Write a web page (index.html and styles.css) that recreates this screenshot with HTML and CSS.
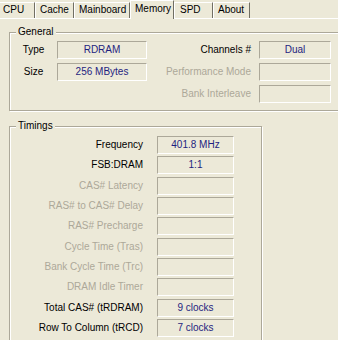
FILE: index.html
```html
<!DOCTYPE html>
<html lang="en">

<head>
    <meta charset="UTF-8">
    <meta name="viewport" content="width=device-width, initial-scale=1.0">
    <title>Memory</title>
    <link rel="stylesheet" href="styles.css">
</head>

<body>
    <div class="window">
        <div class="tabs">
            <div class="tab tab-cpu">CPU</div>
            <div class="tab tab-cache">Cache</div>
            <div class="tab tab-board">Mainboard</div>
            <div class="tab tab-memory active">Memory</div>
            <div class="tab tab-spd">SPD</div>
            <div class="tab tab-about">About</div>
        </div>

        <div class="panel">
            <div class="group general">
                <div class="group-title">General</div>
                <div class="general-grid">
                    <div class="label center">Type</div>
                    <div class="value">RDRAM</div>
                    <div class="label right">Channels #</div>
                    <div></div>
                    <div class="value">Dual</div>

                    <div class="label center">Size</div>
                    <div class="value">256 MBytes</div>
                    <div class="label right off">Performance Mode</div>
                    <div></div>
                    <div class="value"></div>

                    <div></div>
                    <div></div>
                    <div class="label right off">Bank Interleave</div>
                    <div></div>
                    <div class="value"></div>
                </div>
            </div>

            <div class="group timings">
                <div class="group-title">Timings</div>
                <div class="timing-grid">
                    <div class="label right">Frequency</div>
                    <div class="value">401.8 MHz</div>

                    <div class="label right">FSB:DRAM</div>
                    <div class="value">1:1</div>

                    <div class="label right off">CAS# Latency</div>
                    <div class="value"></div>

                    <div class="label right off">RAS# to CAS# Delay</div>
                    <div class="value"></div>

                    <div class="label right off">RAS# Precharge</div>
                    <div class="value"></div>

                    <div class="label right off">Cycle Time (Tras)</div>
                    <div class="value"></div>

                    <div class="label right off">Bank Cycle Time (Trc)</div>
                    <div class="value"></div>

                    <div class="label right off">DRAM Idle Timer</div>
                    <div class="value"></div>

                    <div class="label right">Total CAS# (tRDRAM)</div>
                    <div class="value">9 clocks</div>

                    <div class="label right">Row To Column (tRCD)</div>
                    <div class="value">7 clocks</div>
                </div>
            </div>
        </div>
    </div>
</body>

</html>
```

FILE: styles.css
```css
* {
    margin: 0;
    padding: 0;
    box-sizing: border-box;
}

body {
    font-family: "Liberation Sans", Arial, sans-serif;
    font-size: 10px;
    background-color: #ece9d8;
    color: #000;
    overflow: hidden;
    width: 338px;
    height: 340px;
}

.window {
    width: 338px;
    height: 340px;
    overflow: hidden;
}

/* tab strip */

.tabs {
    display: flex;
    align-items: flex-end;
    height: 19px;
    border-bottom: 1px solid #fff;
}

.tab {
    height: 16px;
    line-height: 14px;
    padding-left: 4px;
    border-top: 1px solid #fff;
    border-left: 1px solid #fff;
    border-right: 1px solid #716f64;
    white-space: nowrap;
}

.tab-cpu {
    width: 35px;
    padding-left: 3px;
    border-left: none;
}

.tab-cache {
    width: 39px;
}

.tab-board {
    width: 56px;
}

.tab-memory {
    width: 44px;
}

.tab-spd {
    width: 39px;
    padding-left: 5px;
}

.tab-about {
    width: 37px;
}

.tab.active {
    height: 19px;
    line-height: 15px;
    margin-bottom: -1px;
    background-color: #ece9d8;
    position: relative;
}

/* group boxes */

.panel {
    padding-top: 13px;
}

.group {
    border: 1px solid #aca899;
    box-shadow: inset 1px 1px 0 #fff, 1px 1px 0 #fff;
    margin-left: 9px;
}

.group-title {
    display: table;
    margin: -7px 0 0 6px;
    padding: 0 2px;
    line-height: 12px;
    background-color: #ece9d8;
}

.general {
    width: 340px;
    height: 79px;
}

.general-grid {
    display: grid;
    grid-template-columns: 47px 90px 104px 8px 72px;
    grid-template-rows: 18px 18px 18px;
    row-gap: 4px;
    margin-top: 3px;
}

.timings {
    width: 253px;
    height: 240px;
    margin-top: 15px;
}

.timing-grid {
    display: grid;
    grid-template-columns: 133px 77px;
    grid-auto-rows: 18px;
    column-gap: 14px;
    row-gap: 2.35px;
    margin-top: 4px;
}

/* labels and values */

.label {
    line-height: 18px;
    white-space: nowrap;
}

.center {
    text-align: center;
}

.right {
    text-align: right;
}

.off {
    color: #aca899;
}

.value {
    height: 18px;
    line-height: 16px;
    text-align: center;
    color: #1f1f80;
    border-top: 1px solid #aca899;
    border-left: 1px solid #aca899;
    border-bottom: 1px solid #fff;
    border-right: 1px solid #fff;
}
```
